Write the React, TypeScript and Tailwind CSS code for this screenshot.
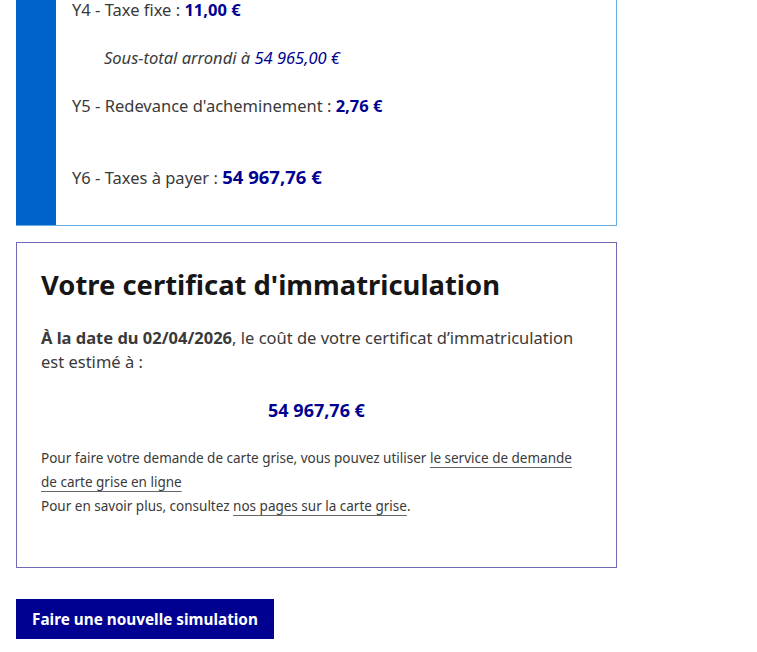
import React from 'react'

const font = { fontFamily: '"Noto Sans", "Liberation Sans", sans-serif' }

const App = () => {
  return (
    <div className="bg-white w-[757px] h-[652px] overflow-hidden text-[#3a3a3a]" style={font}>
      <div className="pl-4 w-[617px] -mt-[14px]">
        {/* Detail des taxes */}
        <div className="flex border-r border-b border-[#6aaee6]">
          <div className="w-10 shrink-0 bg-[#0063cb]" />
          <div className="pl-4 pt-[12px] pb-[35px] text-[16.5px] leading-6">
            <p>
              Y4 - Taxe fixe : <span className="font-bold text-[#000091]">11,00 €</span>
            </p>
            <p className="mt-6 pl-8 italic">
              Sous-total arrondi à <span className="text-[#000091]">54 965,00 €</span>
            </p>
            <p className="mt-6">
              Y5 - Redevance d'acheminement : <span className="font-bold text-[#000091]">2,76 €</span>
            </p>
            <p className="mt-[47px]">
              Y6 - Taxes à payer : <span className="font-bold text-[18.5px] leading-6 text-[#000091]">54 967,76 €</span>
            </p>
          </div>
        </div>

        {/* Certificat */}
        <div className="mt-4 border border-[#6e6ab8] h-[326px] px-6 pt-[24px]">
          <h2 className="text-[27.4px] leading-9 font-bold text-[#161616]">
            Votre certificat d'immatriculation
          </h2>
          <p className="mt-[23px] max-w-[545px] text-[16.5px] leading-6">
            <span className="font-bold">À la date du 02/04/2026</span>, le coût de votre certificat d’immatriculation
            est estimé à :
          </p>
          <p className="mt-[22px] text-center text-lg font-bold text-[#000091]">54 967,76 €</p>
          <div className="mt-[22px] max-w-[542px] text-[13.5px] leading-6">
            <p>
              Pour faire votre demande de carte grise, vous pouvez utiliser{' '}
              <a href="#" className="underline underline-offset-4 decoration-[#666666]">
                le service de demande de carte grise en ligne
              </a>
            </p>
            <p>
              Pour en savoir plus, consultez{' '}
              <a href="#" className="underline underline-offset-4 decoration-[#666666]">
                nos pages sur la carte grise
              </a>
              .
            </p>
          </div>
        </div>

        <button className="mt-[31px] h-10 px-4 bg-[#000091] text-white font-bold text-[15.3px]">
          Faire une nouvelle simulation
        </button>
      </div>
    </div>
  )
}

export default App
